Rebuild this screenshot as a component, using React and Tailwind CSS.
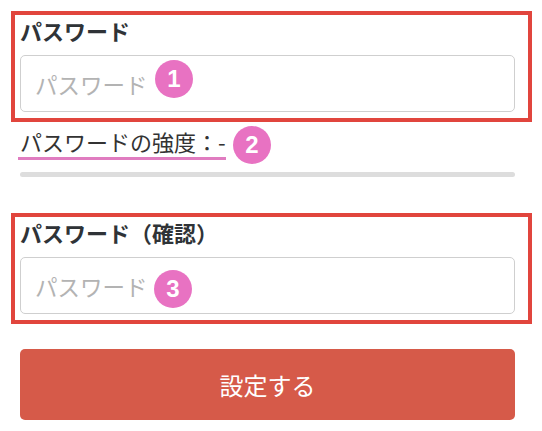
import { useState } from 'react';

const FONT = { fontFamily: '"Noto Sans CJK JP", "Noto Sans", sans-serif' };

// pink numbered marker laid over the form
const Badge = ({ n, className }) => (
  <span
    className={`absolute flex items-center justify-center w-[38px] h-[38px] rounded-full bg-[#e872c2] text-white text-[24px] font-bold font-['Liberation_Sans',Arial,sans-serif] pointer-events-none ${className}`}
  >
    {n}
  </span>
);

const Field = ({ label, value, onChange, badge, badgeClass }) => (
  <div className="ml-[11px] w-[521px] border-4 border-[#e1453d] pl-[5px] pr-[13px] pt-[1px] pb-[6px]">
    <p className="text-[22px] leading-[28px] font-bold text-[#2f3337]">{label}</p>
    <div className="relative mt-[11px]">
      <input
        type="password"
        value={value}
        onChange={(e) => onChange(e.target.value)}
        placeholder="パスワード"
        className="block w-full h-[57px] rounded-[5px] border border-[#cfcfcf] bg-white pl-[14px] text-[22.5px] text-[#333] placeholder:text-[#b3b3b3] outline-none"
        style={FONT}
      />
      <Badge n={badge} className={badgeClass} />
    </div>
  </div>
);

export default function App() {
  const [password, setPassword] = useState('');
  const [confirm, setConfirm] = useState('');

  return (
    <div className="w-[542px] h-[431px] bg-white pt-[11px] overflow-hidden" style={FONT}>
      <Field
        label="パスワード"
        value={password}
        onChange={setPassword}
        badge="1"
        badgeClass="left-[135px] top-[5px]"
      />

      {/* strength */}
      <div className="relative pl-[20px] pr-[27px] mt-[5px]">
        <p className="text-[22px] leading-[28px] text-[#333]">パスワードの強度：-</p>
        <div className="mt-[2px] -ml-[2px] w-[208px] h-[3px] bg-[#e07cc0]" />
        <Badge n="2" className="left-[233px] top-[-1px]" />
        <div className="mt-[12px] h-[5px] rounded-full bg-[#dddddd]" />
      </div>

      <div className="mt-[36px]">
        <Field
          label="パスワード（確認）"
          value={confirm}
          onChange={setConfirm}
          badge="3"
          badgeClass="left-[134px] top-[13px]"
        />
      </div>

      <div className="pl-[20px] pr-[27px] mt-[25px]">
        <button className="w-full h-[71px] rounded-[5px] bg-[#d65a49] text-white text-[24px]">
          設定する
        </button>
      </div>
    </div>
  );
}
